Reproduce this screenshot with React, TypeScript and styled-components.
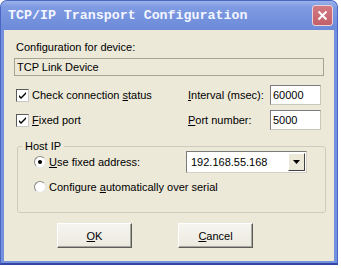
import styled, { createGlobalStyle } from 'styled-components';

const GlobalStyle = createGlobalStyle`
  body {
    margin: 0;
    background: #ffffff;
    font-family: "Liberation Sans", Arial, sans-serif;
    font-size: 11px;
    color: #000;
  }
`;

const Window = styled.div`
  width: 338px;
  height: 265px;
  display: flex;
  flex-direction: column;
  background: #7391dc;
  border-radius: 7px 7px 0 0;
  border: 1px solid #4a66c4;
  border-bottom: 2px solid #3346a8;
  box-sizing: border-box;
  overflow: hidden;
`;

const TitleBar = styled.div`
  height: 29px;
  flex: none;
  display: flex;
  align-items: center;
  justify-content: space-between;
  padding: 0 4px 0 7px;
  background: linear-gradient(#9bb2ea 0%, #7f9be2 20%, #7592dd 60%, #6c8ad9 100%);
`;

const Title = styled.span`
  font-family: "Liberation Mono", "Courier New", monospace;
  font-weight: bold;
  font-size: 13.3px;
  color: #f4f6ff;
`;

const CloseButton = styled.div`
  width: 19px;
  height: 19px;
  border-radius: 3px;
  border: 1px solid #ecd2d6;
  background: linear-gradient(#d47a82, #c2606a);
  display: flex;
  align-items: center;
  justify-content: center;
`;

const Body = styled.div`
  flex: 1;
  margin: 0 3px 2px 3px;
  background: #ece9d8;
  padding: 11px 10px 0 10px;
  display: flex;
  flex-direction: column;
`;

const Label = styled.div<{ $indent?: number }>`
  padding-left: ${(p) => p.$indent ?? 0}px;
  line-height: 13px;
  white-space: nowrap;
`;

const ReadOnlyField = styled.div`
  margin-top: 4px;
  height: 18px;
  box-sizing: border-box;
  border: 1px solid #a6a395;
  padding-left: 2px;
  line-height: 16px;
`;

const OptionsGrid = styled.div`
  margin-top: 9px;
  padding-left: 2px;
  display: grid;
  grid-template-columns: 172px 82px 51px;
  grid-auto-rows: 20px;
  row-gap: 5px;
  align-items: center;
`;

const CheckRow = styled.label`
  display: flex;
  align-items: center;
  gap: 3px;
`;

const CheckBox = styled.span`
  width: 13px;
  height: 13px;
  box-sizing: border-box;
  border: 1px solid #5a5a5a;
  border-right-color: #c8c8c8;
  border-bottom-color: #c8c8c8;
  background: #fff;
  display: flex;
  align-items: center;
  justify-content: center;
`;

const TextInput = styled.div`
  height: 20px;
  box-sizing: border-box;
  border: 1px solid #7b7b7b;
  border-right-color: #c9c7ba;
  border-bottom-color: #c9c7ba;
  background: #fff;
  padding-left: 2px;
  line-height: 18px;
`;

const GroupBox = styled.fieldset`
  margin: 10px 0 0 3px;
  width: 309px;
  box-sizing: border-box;
  border: 1px solid #cfccbd;
  border-radius: 3px;
  padding: 0 0 19px 16px;
`;

const Legend = styled.legend`
  margin-left: -12px;
  padding: 0 3px;
  line-height: 12px;
`;

const RadioRow = styled.div<{ $top: number }>`
  margin-top: ${(p) => p.$top}px;
  display: flex;
  align-items: center;
`;

const RadioLabel = styled.label<{ $width?: number }>`
  display: flex;
  align-items: center;
  gap: 3px;
  width: ${(p) => (p.$width ? `${p.$width}px` : 'auto')};
  white-space: nowrap;
`;

const Radio = styled.span<{ $checked?: boolean }>`
  width: 12px;
  height: 12px;
  box-sizing: border-box;
  border-radius: 50%;
  border: 1px solid #8a8a8a;
  border-right-color: #e6e6e6;
  border-bottom-color: #e6e6e6;
  background: #fff;
  display: flex;
  align-items: center;
  justify-content: center;
  &::after {
    content: '';
    width: 4px;
    height: 4px;
    border-radius: 50%;
    background: ${(p) => (p.$checked ? '#000' : 'transparent')};
  }
`;

const Combo = styled.div`
  width: 121px;
  height: 22px;
  box-sizing: border-box;
  border: 1px solid #7b7b7b;
  border-right-color: #d4d0c8;
  border-bottom-color: #d4d0c8;
  background: #fff;
  display: flex;
  align-items: center;
  justify-content: space-between;
  padding: 1px;
`;

const ComboText = styled.span`
  padding-left: 3px;
`;

const ComboButton = styled.div`
  width: 17px;
  height: 18px;
  box-sizing: border-box;
  background: #ece9d8;
  border: 1px solid;
  border-color: #fff #404040 #404040 #fff;
  display: flex;
  align-items: center;
  justify-content: center;
`;

const ButtonRow = styled.div`
  margin-top: 10px;
  padding-left: 43px;
  display: flex;
  gap: 46px;
`;

const Button = styled.button`
  width: 75px;
  height: 25px;
  box-sizing: border-box;
  font-family: "Liberation Sans", Arial, sans-serif;
  font-size: 11px;
  color: #000;
  background: linear-gradient(#f6f5ef, #ebe9df);
  border: 1px solid;
  border-color: #fff #5c5c5c #5c5c5c #fff;
  box-shadow: inset -1px -1px #a9a69a;
  padding: 0;
`;

const Key = styled.u`
  text-decoration-thickness: 1px;
  text-underline-offset: 1px;
`;

const Check = () => (
  <svg width="9" height="9" viewBox="0 0 9 9">
    <path d="M1 4 L3 6 L8 1 L8 3 L3 8 L1 6 Z" fill="#000" />
  </svg>
);

export default function App() {
  return (
    <>
      <GlobalStyle />
      <Window>
        <TitleBar>
          <Title>TCP/IP Transport Configuration</Title>
          <CloseButton>
            <svg width="11" height="11" viewBox="0 0 11 11">
              <path d="M1.5 1.5 L9.5 9.5 M9.5 1.5 L1.5 9.5" stroke="#fff" strokeWidth="2" />
            </svg>
          </CloseButton>
        </TitleBar>
        <Body>
          <Label $indent={2}>Configuration for device:</Label>
          <ReadOnlyField>TCP Link Device</ReadOnlyField>
          <OptionsGrid>
            <CheckRow>
              <CheckBox>
                <Check />
              </CheckBox>
              <span>
                Check connection <Key>s</Key>tatus
              </span>
            </CheckRow>
            <Label>
              <Key>I</Key>nterval (msec):
            </Label>
            <TextInput>60000</TextInput>
            <CheckRow>
              <CheckBox>
                <Check />
              </CheckBox>
              <span>
                <Key>F</Key>ixed port
              </span>
            </CheckRow>
            <Label>
              <Key>P</Key>ort number:
            </Label>
            <TextInput>5000</TextInput>
          </OptionsGrid>
          <GroupBox>
            <Legend>Host IP</Legend>
            <RadioRow $top={-1}>
              <RadioLabel $width={152}>
                <Radio $checked />
                <span>
                  <Key>U</Key>se fixed address:
                </span>
              </RadioLabel>
              <Combo>
                <ComboText>192.168.55.168</ComboText>
                <ComboButton>
                  <svg width="7" height="4" viewBox="0 0 7 4">
                    <path d="M0 0 H7 L3.5 4 Z" fill="#000" />
                  </svg>
                </ComboButton>
              </Combo>
            </RadioRow>
            <RadioRow $top={8}>
              <RadioLabel>
                <Radio />
                <span>
                  Configure <Key>a</Key>utomatically over serial
                </span>
              </RadioLabel>
            </RadioRow>
          </GroupBox>
          <ButtonRow>
            <Button>
              <Key>O</Key>K
            </Button>
            <Button>
              <Key>C</Key>ancel
            </Button>
          </ButtonRow>
        </Body>
      </Window>
    </>
  );
}
